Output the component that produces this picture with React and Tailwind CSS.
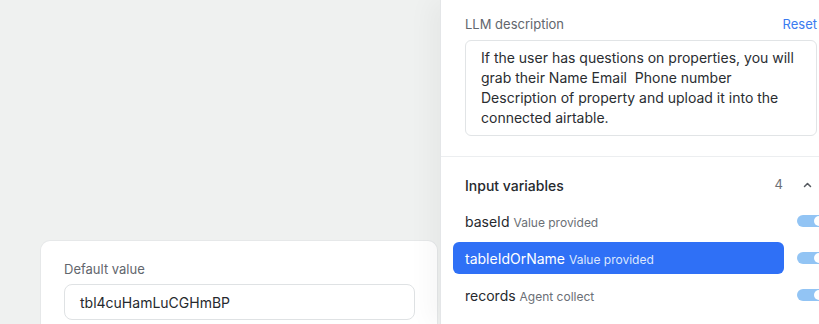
import React from "react";

const rows = [
  { name: "baseId", hint: "Value provided" },
  { name: "tableIdOrName", hint: "Value provided", active: true },
  { name: "records", hint: "Agent collect" },
];

const Toggle = () => (
  <div className="flex items-center justify-end w-7 h-3 rounded-full shrink-0 px-[1px] bg-[#92c4f4]">
    <div className="w-[10px] h-[10px] rounded-full bg-white" />
  </div>
);

const App = () => {
  return (
    <div
      className="flex w-[819px] h-[324px] overflow-hidden bg-[#eff1f0] text-[#26292e]"
      style={{ fontFamily: "Inter, 'Noto Sans', sans-serif" }}
    >
      {/* Canvas side */}
      <div className="flex flex-col justify-end w-[440px] shrink-0">
        <div className="ml-10 w-[398px] h-[84px] bg-white rounded-t-[10px] border border-b-0 border-[#e6e8e9] px-[23px] pt-5">
          <div className="text-[13px] leading-4 text-[#62666d]">Default value</div>
          <div className="mt-[7px] h-9 w-[351px] rounded-lg border border-[#dfe2e4] flex items-center px-[15px] text-[14px]">
            tbl4cuHamLuCGHmBP
          </div>
        </div>
      </div>

      {/* Side panel */}
      <div className="w-[401px] shrink-0 bg-white border-l border-[#e4e6e8] shadow-[-10px_0_24px_rgba(0,0,0,0.04)]">
        <div className="px-6 pt-4 pb-5 border-b border-[#eceef0]">
          <div className="flex items-center justify-between h-[18px]">
            <span className="text-[13px] text-[#62666d]">LLM description</span>
            <span className="text-[13px] text-[#3a7bf0]">Reset</span>
          </div>
          <div className="mt-[6px] h-[96px] rounded-md border border-[#e1e4e6] pl-[15px] pr-4 pt-[7px] text-[14px] leading-5 text-[#2a2d31]">
            If the user has questions on properties, you will grab their Name Email&nbsp; Phone number Description of property and upload it into the connected airtable.
          </div>
        </div>

        <div className="px-6 pt-[18px]">
          <div className="flex items-center h-5">
            <span className="text-[14px] font-medium text-[#26292e]">Input variables</span>
            <span className="ml-auto text-[13px] text-[#6b6f76]">4</span>
            <svg className="ml-5 mr-[5px]" width="9" height="6" viewBox="0 0 9 6" fill="none">
              <path d="M1.5 4.5 4.5 1.5 7.5 4.5" stroke="#55595f" strokeWidth="1.5" strokeLinecap="round" strokeLinejoin="round" />
            </svg>
          </div>

          <div className="mt-[10px] flex flex-col gap-[5px] -ml-3">
            {rows.map((r) => (
              <div key={r.name} className="flex items-center gap-[13px]">
                <div
                  className={`flex items-baseline gap-1 w-[331px] shrink-0 h-8 rounded-md px-3 pt-[6px] ${
                    r.active ? "bg-[#2f70f6] text-white" : "text-[#26292e]"
                  }`}
                >
                  <span className="text-[14px]">{r.name}</span>
                  <span className={`text-[12px] ${r.active ? "text-[#dce7fd]" : "text-[#6b6f76]"}`}>{r.hint}</span>
                </div>
                <Toggle />
              </div>
            ))}
          </div>
        </div>
      </div>
    </div>
  );
};

export default App;
